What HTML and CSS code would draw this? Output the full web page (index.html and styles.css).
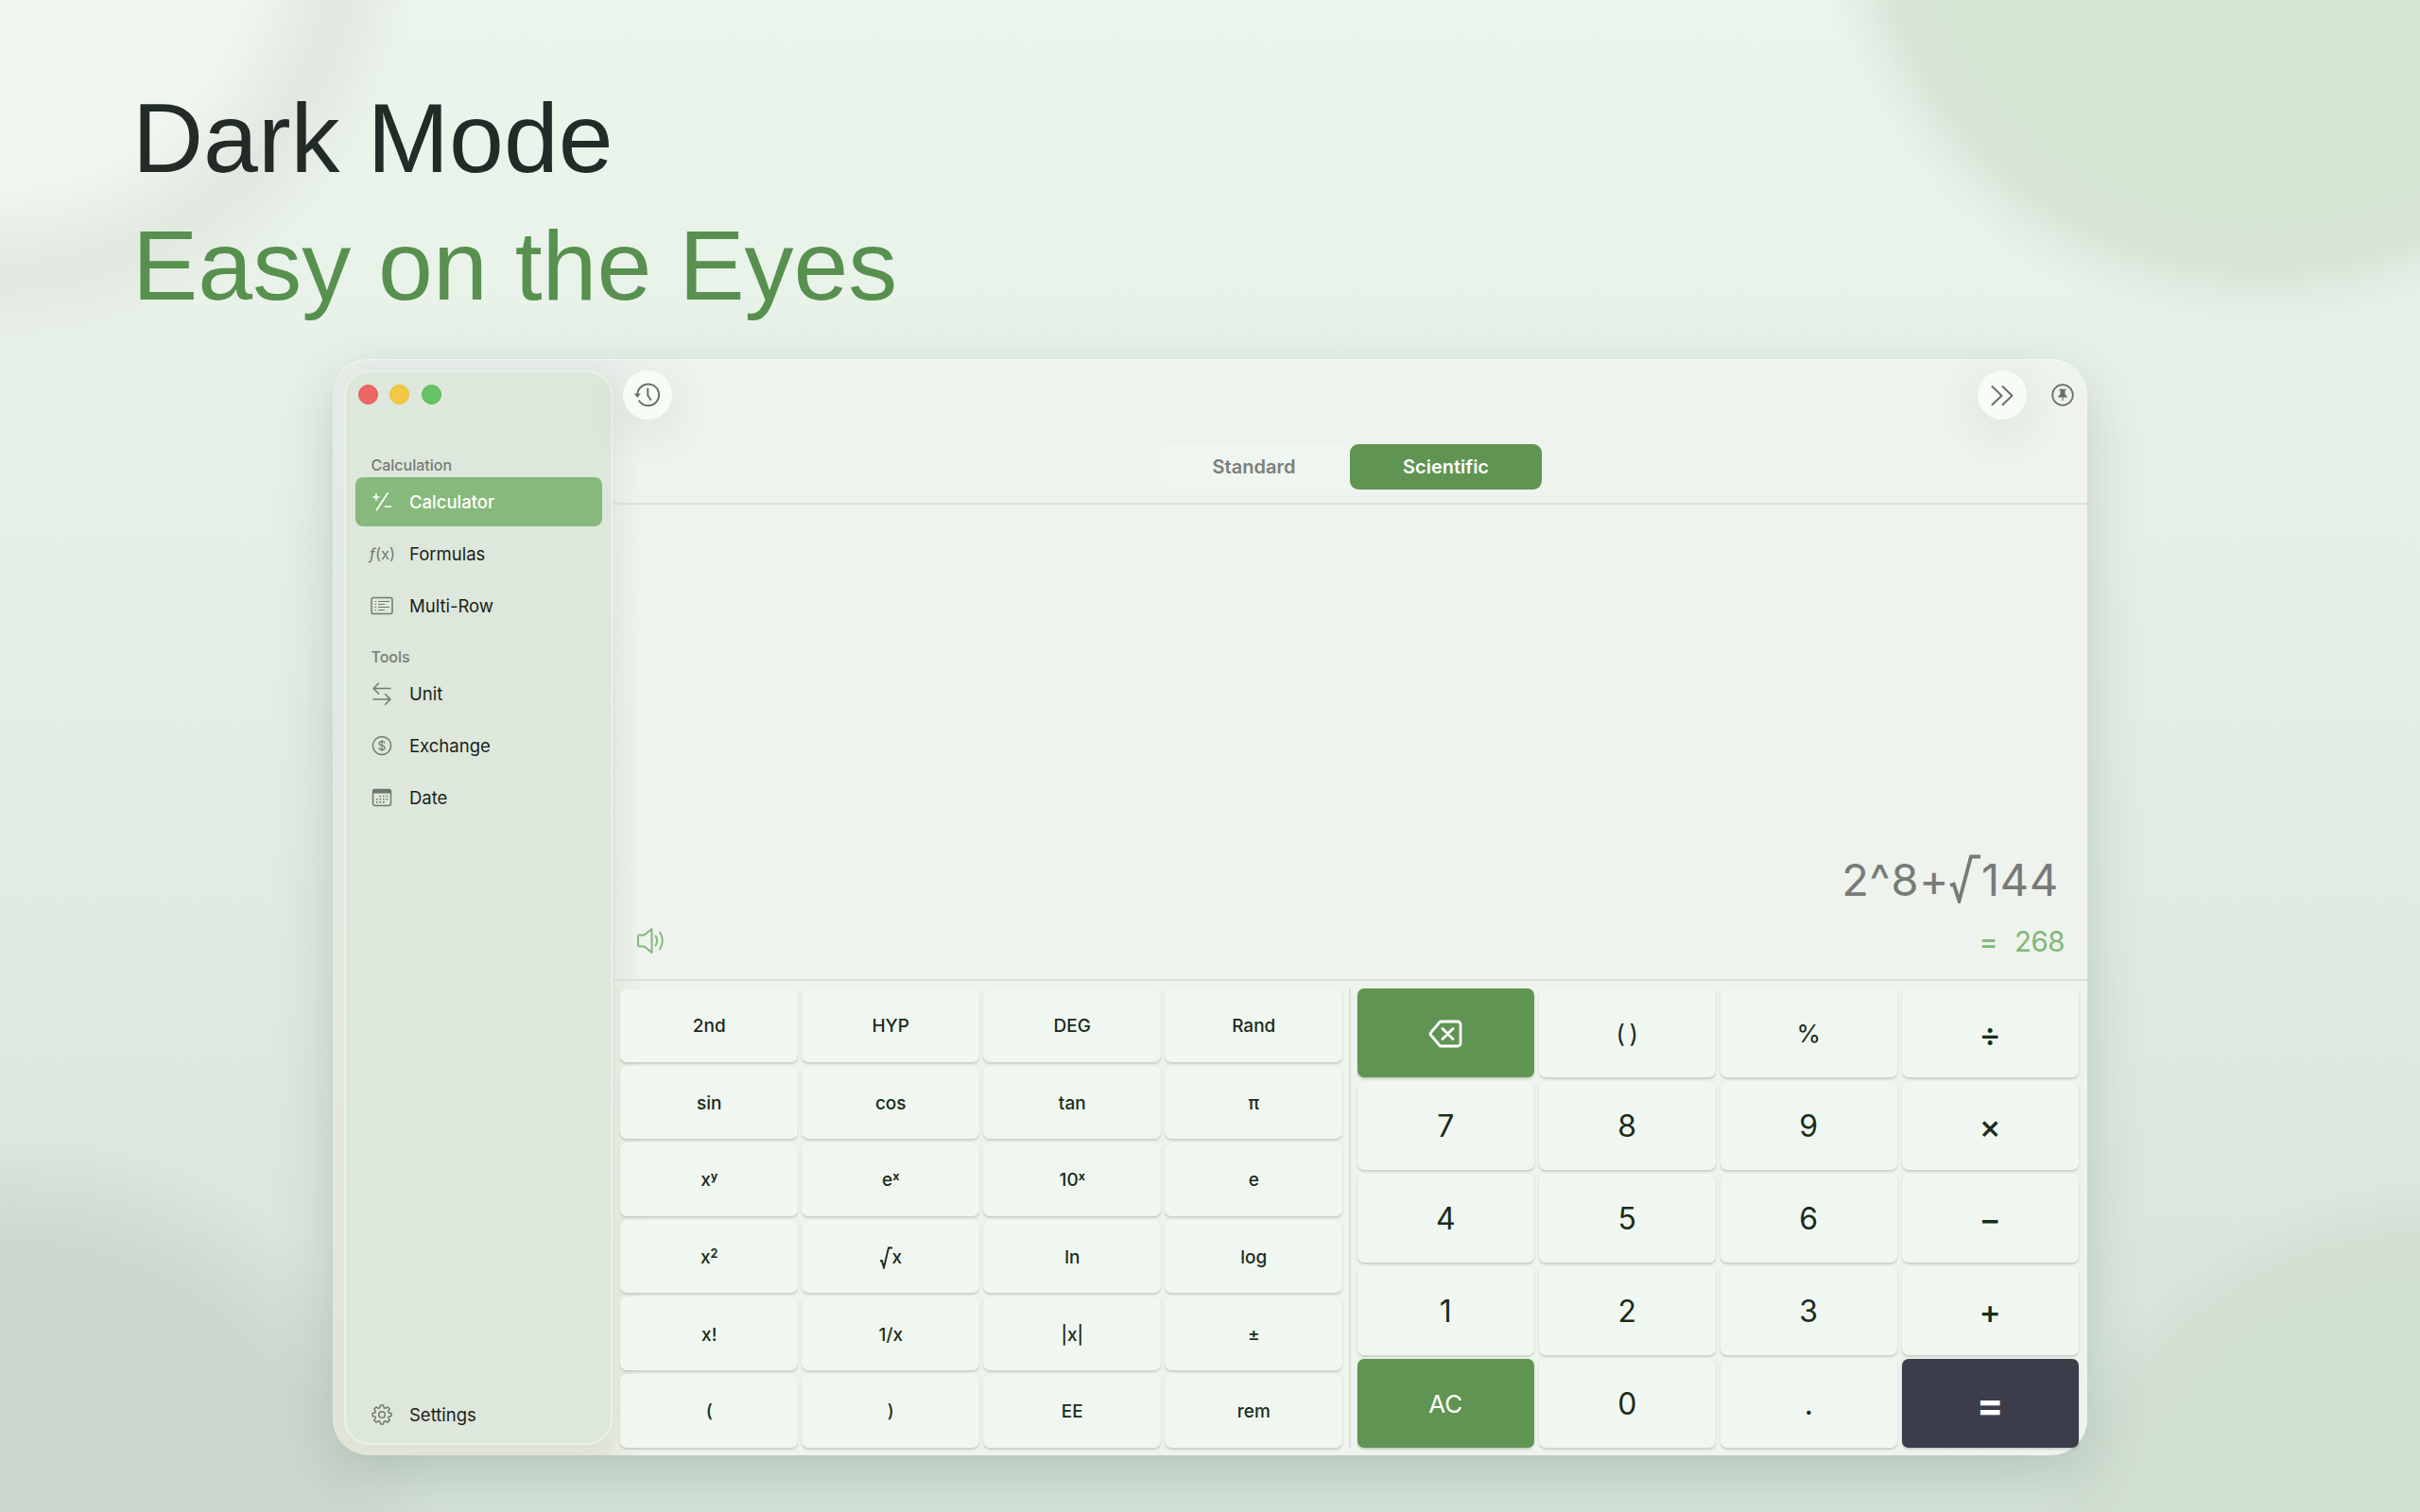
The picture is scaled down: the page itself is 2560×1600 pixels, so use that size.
FILE: index.html
```
<!DOCTYPE html>
<html lang="en">
<head>
  <meta charset="UTF-8">
  <meta name="viewport" content="width=device-width, initial-scale=1">
  <title>Calculator</title>
  <link rel="stylesheet" href="styles.css">
</head>
<body>
  <header class="headline">
    <h1>Dark Mode</h1>
    <h2>Easy on the Eyes</h2>
  </header>

  <div class="window">
    <!-- SIDEBAR -->
    <aside class="sidebar">
      <div class="lights">
        <span class="light red"></span>
        <span class="light yellow"></span>
        <span class="light green"></span>
      </div>
      <h3>Calculation</h3>
      <a class="item active">
        <svg class="icon" viewBox="0 0 28 28"><path d="M5 9h6M8 6v6M20 5L8.500 22.500M17.500 19h6"/></svg>
        Calculator
      </a>
      <a class="item">
        <span class="fx"><i>ƒ</i>(x)</span>
        Formulas
      </a>
      <a class="item">
        <svg class="icon" viewBox="0 0 28 28"><rect x="3" y="5.500" width="22" height="17" rx="2"/><path class="thin" d="M10 9.500h12M10 12.500h7M10 15.500h12M10 18.500h7M6.500 9.500h1.500M6.500 12.500h1.500M6.500 15.500h1.500M6.500 18.500h1.500"/></svg>
        Multi-Row
      </a>
      <h3 class="tools">Tools</h3>
      <a class="item">
        <svg class="icon" viewBox="0 0 28 28"><path d="M23 8.500H5M10.500 3L5 8.500l5.500 5.500M5 20h18M17.500 14.500L23 20l-5.500 5.500"/></svg>
        Unit
      </a>
      <a class="item">
        <svg class="icon" viewBox="0 0 28 28"><circle cx="14" cy="14" r="9.600"/><path class="thin" d="M17 11.500c-.3-1.300-1.500-1.900-3-1.900-1.700 0-3 .8-3 2.100 0 3 6.200 1.400 6.200 4.500 0 1.400-1.400 2.200-3.200 2.200-1.700 0-3-.8-3.200-2.200M14 8v12"/></svg>
        Exchange
      </a>
      <a class="item">
        <svg class="icon" viewBox="0 0 28 28"><rect x="4.500" y="5.500" width="19" height="17" rx="2.500"/><path class="solid" d="M4.500 9.500V7a2 2 0 0 1 2-2h15a2 2 0 0 1 2 2v2.500z"/><path class="dots" d="M11.500 12.500h9M8 15.700h12.500M8 18.900h9"/></svg>
        Date
      </a>
      <a class="item settings">
        <svg class="icon" viewBox="0 0 28 28"><circle cx="14" cy="14" r="3.300"/><path d="M11.900 6.700L12.400 4.100H15.600L16.100 6.700L17.700 7.300L19.900 5.800L22.200 8.100L20.700 10.300L21.300 11.900L23.900 12.400V15.600L21.300 16.100L20.700 17.700L22.200 19.900L19.900 22.200L17.700 20.700L16.100 21.300L15.600 23.900H12.400L11.900 21.300L10.300 20.700L8.100 22.200L5.800 19.900L7.300 17.700L6.700 16.100L4.100 15.600V12.400L6.700 11.900L7.300 10.300L5.800 8.100L8.100 5.800L10.300 7.300Z"/></svg>
        Settings
      </a>
    </aside>

    <!-- MAIN AREA -->
    <main class="main">
      <div class="toolbar">
        <button class="round">
          <svg viewBox="0 0 52 52"><path d="M15.300 25.500A11.400 11.400 0 1 1 17.200 32.200M26.300 19.500v7l3.200 4.500"/><path class="solid" d="M11.800 24.500h7l-3.500 4.500z"/></svg>
        </button>
        <span class="space"></span>
        <button class="round">
          <svg viewBox="0 0 52 52"><path d="M15.500 17l10 9.700-10 9.600M26.500 17l10 9.700-10 9.600"/></svg>
        </button>
        <svg class="pin" viewBox="0 0 24 24"><circle cx="12" cy="12" r="10.800"/><path class="solid" d="M8.500 5.700h7v1.800h-1.200l.5 4.200c1.200.6 1.900 1.500 1.900 2.700h-4.200v3.200l-.5 1.200-.5-1.200v-3.200H7.300c0-1.200.7-2.100 1.900-2.700l.5-4.200H8.500z"/></svg>
      </div>

      <div class="tabs">
        <div class="segment">
          <span>Standard</span>
          <span class="on">Scientific</span>
        </div>
      </div>

      <div class="display">
        <div class="expression">2^8+<svg class="root" viewBox="0 0 34 52"><path d="M1 33l3.800-1.300L10.500 49.500L23 2.500H33"/></svg>144</div>
        <div class="answer">
          <svg class="speaker" viewBox="0 0 32 36"><path d="M2.500 12.500h5L15.500 6v25L7.500 24.500h-5a1.500 1.500 0 0 1-1.500-1.500v-9a1.500 1.500 0 0 1 1.500-1.500zM19.500 13.500a9 9 0 0 1 0 10M24 9.500a16 16 0 0 1 0 18"/></svg>
          <span class="result"><b>=</b>268</span>
        </div>
      </div>

      <div class="keys">
        <div class="pad functions">
          <div class="key">2nd</div><div class="key">HYP</div><div class="key">DEG</div><div class="key">Rand</div>
          <div class="key">sin</div><div class="key">cos</div><div class="key">tan</div><div class="key">π</div>
          <div class="key">x<sup>y</sup></div><div class="key">e<sup>x</sup></div><div class="key">10<sup>x</sup></div><div class="key">e</div>
          <div class="key">x<sup>2</sup></div><div class="key"><svg class="sqrt" viewBox="0 0 14 24"><path d="M1 15.500l1.800-.6L5 22.300L10 1.500H14"/></svg>x</div><div class="key">ln</div><div class="key">log</div>
          <div class="key">x!</div><div class="key">1/x</div><div class="key">|x|</div><div class="key">±</div>
          <div class="key">(</div><div class="key">)</div><div class="key">EE</div><div class="key">rem</div>
        </div>
        <div class="rule"></div>
        <div class="pad numbers">
          <div class="key accent"><svg class="delete" viewBox="0 0 36 32"><path d="M12.500 3H31a3 3 0 0 1 3 3v20a3 3 0 0 1-3 3H12.500L2.800 17.500a2.200 2.200 0 0 1 0-3zM15 10.500l11 11M26 10.500l-11 11"/></svg></div>
          <div class="key small">(&thinsp;)</div><div class="key small">%</div><div class="key op">÷</div>
          <div class="key">7</div><div class="key">8</div><div class="key">9</div><div class="key op">×</div>
          <div class="key">4</div><div class="key">5</div><div class="key">6</div><div class="key op">−</div>
          <div class="key">1</div><div class="key">2</div><div class="key">3</div><div class="key op">+</div>
          <div class="key small accent">AC</div><div class="key">0</div><div class="key">.</div><div class="key equals">=</div>
        </div>
      </div>
    </main>
  </div>
</body>
</html>
```

FILE: styles.css
```
* {
  box-sizing: border-box;
  margin: 0;
  padding: 0;
}
/* soft circles in the corners over a vertical fade */
body {
  width: 2560px;
  height: 1600px;
  background:
    radial-gradient(circle 440px at 0 -70px, #f1f8f1 0%, #eff6ef 62%, #e7eee6 73%, #e1e8e0 82%, #e5ece4 90%, rgba(230,240,230,0) 100%),
    radial-gradient(circle 480px at 2395px -130px, #d5e6d3 0%, #d4e5d2 74%, #d8e3d7 85%, rgba(220,231,220,.6) 92%, rgba(225,236,225,0) 100%),
    radial-gradient(circle 470px at 10px 1670px, #cdd8cf 0%, #cdd8d0 76%, rgba(204,215,206,0) 100%),
    radial-gradient(circle 450px at 2580px 1700px, #d0e1d0 0%, #d0e0d0 74%, rgba(205,219,206,.6) 87%, rgba(205,219,206,0) 100%),
    linear-gradient(180deg, #ebf5ec 0%, #e6f0e6 35%, #dfeae0 65%, #d6e4d9 100%);
  font-family: Inter, "Liberation Sans", sans-serif;
  color: #1a2b1a;
}

.headline {
  height: 380px;
  padding: 79px 140px 0;
  font-family: "Liberation Sans", Arial, sans-serif;
}
.headline h1,
.headline h2 {
  font-size: 104px;
  line-height: 135px;
  font-weight: 400;
}
.headline h1 { color: #232b28; }
.headline h2 { color: #58904f; }

.window {
  display: flex;
  width: 1856px;
  height: 1160px;
  margin: 0 auto;
  padding: 12px 0 11px 12px;
  border-radius: 38px;
  background:
    linear-gradient(90deg, rgba(238,243,237,0) 285px, #eef3ed 330px),
    linear-gradient(180deg, #e6ede9 0%, #e3eae6 35%, #e6eae0 60%, #e3e5d9 100%);
  box-shadow: 0 20px 60px rgba(70,95,80,.24), inset 0 1px 1px #f6faf5;
}

.sidebar {
  display: flex;
  flex-direction: column;
  width: 284px;
  padding: 13px 9.500px 4px;
  border: 2px solid #e7f3e4;
  border-radius: 27px;
  background: #dde7db;
  box-shadow: 4px 0 30px rgba(90,110,100,.05);
}
.lights { display: flex; gap: 12.500px; padding: 0 3px; height: 74.500px; }
.light { width: 21px; height: 21px; border-radius: 50%; border: 1px solid; }
.red { background: #ed6765; border-color: #e7504f; }
.yellow { background: #f4c843; border-color: #edbb29; }
.green { background: #63c366; border-color: #4fb854; }

.sidebar h3 {
  padding-left: 17px;
  font-size: 16px;
  line-height: 20px;
  font-weight: 550;
  color: #747b73;
}
.sidebar .tools { margin-top: 14.500px; }
.item {
  display: flex;
  align-items: center;
  gap: 15.500px;
  height: 52px;
  margin-bottom: 3.200px;
  padding-left: 14px;
  border-radius: 8px;
  font-size: 18.500px;
  font-weight: 400;
  color: #1a1e1a;
}
.sidebar h3 + .item { margin-top: 3px; }
.item.active { background: #86b97b; color: #fff; font-weight: 450; }
.item.settings { margin-top: auto; margin-bottom: 0; }
.icon, .fx { flex: none; width: 28px; height: 28px; }
.icon { fill: none; stroke: #737a72; stroke-width: 1.500; stroke-linecap: round; stroke-linejoin: round; }
.active .icon { stroke: #fff; stroke-width: 1.700; }
.icon .thin { stroke-width: 1.200; stroke-linecap: butt; }
.icon .dots { stroke-width: 1.600; stroke-linecap: butt; stroke-dasharray: 1.600 1.900; }
.icon .solid { fill: #6f766e; stroke: none; }
.fx { padding-left: 1px; font-size: 16.500px; line-height: 28px; color: #737a72; white-space: nowrap; }

.main { flex: 1; display: flex; flex-direction: column; margin-bottom: -2.500px; }

.toolbar { display: flex; align-items: center; height: 52px; padding: 0 14px 0 11px; }
.toolbar svg { fill: none; stroke: #6a6f69; stroke-width: 2; stroke-linecap: round; stroke-linejoin: round; }
.toolbar .solid { fill: #6a6f69; stroke: none; }
.space { flex: 1; }
.round {
  width: 52px;
  height: 52px;
  border: 0;
  border-radius: 50%;
  background: #f7fcf7;
  box-shadow: 0 12px 48px rgba(60,75,65,.11);
}
.round svg { display: block; width: 52px; height: 52px; }
.toolbar .pin { width: 24px; height: 24px; margin-left: 26px; stroke-width: 1.700; }

.tabs { display: flex; justify-content: center; height: 90px; padding-top: 26px; border-bottom: 2px solid #dae1d9; }
.segment { display: flex; width: 406px; height: 48px; border-radius: 9px; background: #eff5ef; }
.segment span {
  flex: 1;
  border-radius: 9px;
  text-align: center;
  font-size: 20px;
  line-height: 49px;
  font-weight: 600;
  color: #7b807a;
}
.segment .on { background: #609452; color: #fff; }

.display {
  flex: 1;
  display: flex;
  flex-direction: column;
  justify-content: flex-end;
  padding: 0 24px 19px 26px;
  border-bottom: 2px solid #dae1d9;
}
.expression {
  display: flex;
  justify-content: flex-end;
  align-items: center;
  height: 60px;
  padding-right: 6px;
  font-size: 47px;
  letter-spacing: .700px;
  color: #777b76;
}
.root { width: 34px; height: 52px; fill: none; stroke: #777b76; stroke-width: 3.800; }
.answer { display: flex; justify-content: space-between; align-items: center; height: 44px; margin-top: 13px; }
.speaker { width: 32px; height: 36px; fill: none; stroke: #81b877; stroke-width: 1.900; stroke-linecap: round; stroke-linejoin: round; }
.result { padding-top: 1px; font-size: 29.500px; line-height: 44px; font-weight: 400; letter-spacing: -.500px; color: #7fb877; }
.result b { margin-right: 18px; font-weight: 450; }

.keys { display: flex; height: 493.500px; padding: 8px 9px 0 8px; }
.pad { display: grid; gap: 4px 4.500px; width: 763.500px; }
.functions { grid-template: repeat(6, 1fr) / repeat(4, 1fr); }
.numbers { grid-template: repeat(5, 1fr) / repeat(4, 1fr); }
.rule { width: 2px; margin: 0 7px; background: #dae1d9; }
.key {
  display: flex;
  align-items: center;
  justify-content: center;
  min-width: 0;
  min-height: 0;
  border-radius: 7px;
  background: #f0f7f0;
  box-shadow: 0 2px 2px rgba(110,130,112,.28), 0 0 2px rgba(110,130,112,.08);
}
.functions .key { padding: 2px 0 0 1px; font-size: 19px; font-weight: 550; }
.key sup { margin-bottom: 8px; font-size: 12.500px; line-height: 12px; font-weight: 700; }
.sqrt { width: 14px; height: 24px; margin-right: -1px; fill: none; stroke: #1a2b1a; stroke-width: 1.900; }
.numbers .key { padding-top: 2px; font-size: 32px; }
.numbers .small { padding-top: 1px; font-size: 26px; }
.numbers .op { padding-top: 2px; font-size: 35px; font-weight: 450; }
.numbers .accent { background: #609452; color: #fff; }
.numbers .equals { padding-top: 3px; background: #3c3d4a; color: #fff; font-size: 42px; font-weight: 700; }
.delete { width: 36px; height: 32px; fill: none; stroke: #fff; stroke-width: 2.800; stroke-linecap: round; stroke-linejoin: round; }
```
